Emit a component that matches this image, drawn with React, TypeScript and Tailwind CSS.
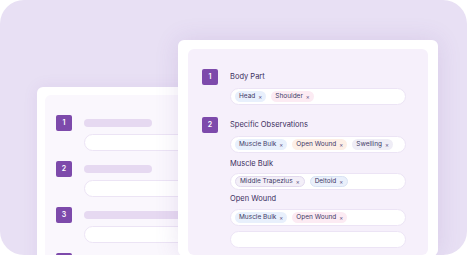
import React from "react";

type Tone = "blue" | "pink" | "peach" | "gray" | "lilacB" | "blueB";

const toneCls: Record<Tone, string> = {
  blue: "bg-[#e8f0fc]",
  pink: "bg-[#fcebf3]",
  peach: "bg-[#fdefe6]",
  gray: "bg-[#efedf6]",
  lilacB: "bg-[#f3eff8] border border-[#e2d9ee]",
  blueB: "bg-[#eaf0fb] border border-[#d9e3f4]",
};

function Chip({ label, tone }: { label: string; tone: Tone }) {
  return (
    <span
      className={`flex h-[11px] items-center gap-[3px] rounded-full px-[4px] text-[6.5px] leading-none text-[#3e3a66] ${toneCls[tone]}`}
    >
      <span>{label}</span>
      <span className="text-[6px] text-[#5f5586]">×</span>
    </span>
  );
}

function Row({ chips }: { chips?: { label: string; tone: Tone }[] }) {
  return (
    <div className="flex h-[17px] w-[176px] items-center gap-[5px] rounded-full border border-[#ece4f5] bg-white pl-[4px]">
      {chips?.map((c) => (
        <Chip key={c.label} label={c.label} tone={c.tone} />
      ))}
    </div>
  );
}

function Badge({ n }: { n?: number }) {
  return (
    <div className="flex h-[16px] w-[16px] shrink-0 items-center justify-center rounded-[2px] bg-[#7d4aab] text-[7px] font-semibold text-white">
      {n}
    </div>
  );
}

function Label({ text, cls }: { text: string; cls?: string }) {
  return (
    <div className={`flex items-center text-[7.5px] text-[#3b2f5e] ${cls ?? ""}`}>{text}</div>
  );
}

function LeftSection({ n, bar }: { n?: number; bar: string }) {
  return (
    <div className="flex gap-[12px]">
      <Badge n={n} />
      <div className="flex flex-col">
        <div className="flex h-[16px] items-center">
          <div className={`h-[8px] rounded-full bg-[#e6d9f1] ${bar}`} />
        </div>
        <div className="mt-[3px] h-[17px] w-[140px] rounded-full border border-[#ece4f5] bg-white" />
      </div>
    </div>
  );
}

export default function App() {
  return (
    <div
      className="relative h-[256px] w-[468px] overflow-hidden bg-white"
      style={{ fontFamily: "Inter, 'Noto Sans', sans-serif" }}
    >
      <div className="relative h-[255px] w-[467px] overflow-hidden rounded-[24px] bg-[#e8e0f4]">
        {/* left card */}
        <div className="absolute left-[37px] top-[87px] w-[170px] rounded-[6px] bg-white p-[8px] pb-0 shadow-[0_0_16px_rgba(110,70,160,0.08)]">
          <div className="flex h-[200px] flex-col gap-[10px] rounded-[6px] bg-[#faf7fd] pl-[11px] pt-[20px]">
            <LeftSection n={1} bar="w-[68px]" />
            <LeftSection n={2} bar="w-[68px]" />
            <LeftSection n={3} bar="w-[120px]" />
            <LeftSection bar="w-[68px]" />
          </div>
        </div>

        {/* right card */}
        <div className="absolute left-[178px] top-[40px] w-[260px] rounded-[6px] bg-white px-[10px] pt-[9px] pb-[1px] shadow-[0_0_24px_rgba(110,70,160,0.14)]">
          <div className="flex h-[206px] flex-col rounded-[6px] bg-[#f6f0fb] pl-[14px] pt-[20px]">
            <div className="flex gap-[12px]">
              <Badge n={1} />
              <div className="flex flex-col">
                <Label text="Body Part" cls="h-[16px]" />
                <div className="mt-[3px]">
                  <Row
                    chips={[
                      { label: "Head", tone: "blue" },
                      { label: "Shoulder", tone: "pink" },
                    ]}
                  />
                </div>
              </div>
            </div>
            <div className="mt-[12px] flex gap-[12px]">
              <Badge n={2} />
              <div className="flex flex-col">
                <Label text="Specific Observations" cls="h-[16px]" />
                <div className="mt-[3px]">
                  <Row
                    chips={[
                      { label: "Muscle Bulk", tone: "blue" },
                      { label: "Open Wound", tone: "peach" },
                      { label: "Swelling", tone: "gray" },
                    ]}
                  />
                </div>
                <Label text="Muscle Bulk" cls="mt-[4px] h-[14px]" />
                <div className="mt-[2px]">
                  <Row
                    chips={[
                      { label: "Middle Trapezius", tone: "lilacB" },
                      { label: "Deltoid", tone: "blueB" },
                    ]}
                  />
                </div>
                <Label text="Open Wound" cls="mt-[2px] h-[14px]" />
                <div className="mt-[3px]">
                  <Row
                    chips={[
                      { label: "Muscle Bulk", tone: "blue" },
                      { label: "Open Wound", tone: "pink" },
                    ]}
                  />
                </div>
                <div className="mt-[5px]">
                  <Row />
                </div>
              </div>
            </div>
          </div>
        </div>
      </div>
    </div>
  );
}
